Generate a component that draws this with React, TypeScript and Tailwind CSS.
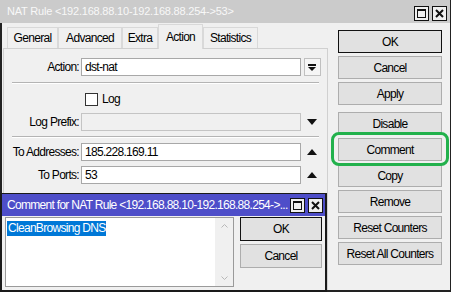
import React from 'react'

const tabs = [
  { label: 'General', w: 'w-[51px]' },
  { label: 'Advanced', w: 'w-[64px]' },
  { label: 'Extra', w: 'w-[36px]' },
  { label: 'Action', w: 'w-[45px]', active: true },
  { label: 'Statistics', w: 'w-[55px]' },
]

const buttons = [
  { label: 'OK', primary: true },
  { label: 'Cancel' },
  { label: 'Apply' },
  { label: 'Disable', gapTop: true },
  { label: 'Comment' },
  { label: 'Copy' },
  { label: 'Remove' },
  { label: 'Reset Counters' },
  { label: 'Reset All Counters' },
]

function TitleBox({ kind }: { kind: 'max' | 'close' }) {
  return (
    <div className="w-[15px] h-[15px] border border-[#111] bg-[#f0f0f0] flex items-center justify-center shrink-0">
      {kind === 'max' ? (
        <div className="w-[9px] h-[9px] border border-[#111] border-t-2" />
      ) : (
        <svg width="9" height="9" viewBox="0 0 9 9">
          <path d="M1 1 L8 8 M8 1 L1 8" stroke="#111" strokeWidth="2" />
        </svg>
      )}
    </div>
  )
}

function Tri({ up }: { up?: boolean }) {
  return (
    <svg width="10" height="6" viewBox="0 0 10 6">
      <path d={up ? 'M0 6 L5 0 L10 6 Z' : 'M0 0 L10 0 L5 6 Z'} fill="#111" />
    </svg>
  )
}

function Field({ label, value, disabled, side }: { label: string; value?: string; disabled?: boolean; side?: React.ReactNode }) {
  return (
    <div className="flex items-center h-[18px]">
      <div className="w-[77px] text-right pr-[2px] whitespace-nowrap">{label}</div>
      <div
        className={`w-[220px] h-[18px] border px-[3px] leading-[16px] ${
          disabled ? 'bg-[#f0f0f0] border-[#c4c4c4]' : 'bg-white border-[#a8a8a8]'
        }`}
      >
        {value}
      </div>
      <div className="w-[20px] flex justify-center ml-[1px]">{side}</div>
    </div>
  )
}

export default function App() {
  return (
    <div className="relative w-[452px] h-[292px] bg-white overflow-hidden font-['Liberation_Sans',Arial,sans-serif] text-[12px] tracking-[-0.7px] text-black">
      <div className="w-[451px] h-[292px] bg-[#f0f0f0] border-r border-[#222] flex flex-col">
        {/* title bar */}
        <div className="h-[23px] bg-[#cbcbcb] flex items-center pl-[7px] pr-[3px] shrink-0">
          <span className="text-[11px] tracking-[-0.2px] text-[#f8f8f8] whitespace-nowrap">NAT Rule &lt;192.168.88.10-192.168.88.254-&gt;53&gt;</span>
          <div className="ml-auto flex gap-[3px] mt-[3px]">
            <TitleBox kind="max" />
            <TitleBox kind="close" />
          </div>
        </div>

        <div className="flex flex-1 border-l-2 border-b-2 border-[#222]">
          {/* left tabbed area */}
          <div className="w-[326px] flex flex-col">
            <div className="flex items-end h-[25px] pl-[5px]">
              {tabs.map((t) => (
                <div
                  key={t.label}
                  className={`${t.w} flex items-center justify-center border border-b-0 border-[#d9d9d9] whitespace-nowrap ${
                    t.active ? 'h-[25px] bg-[#f0f0f0] -mb-[1px] relative z-10 border-[#d0d0d0]' : 'h-[21px] bg-[#f0f0f0]'
                  }`}
                >
                  {t.label}
                </div>
              ))}
            </div>
            <div className="ml-[1px] flex-1 border border-[#d0d0d0] bg-[#f0f0f0] pt-[9px]">
              <Field
                label="Action:"
                value="dst-nat"
                side={
                  <div className="w-[17px] h-[18px] border border-[#c0c0c0] bg-[#f5f5f5] flex flex-col items-center justify-center gap-[1px]">
                    <div className="w-[8px] h-[2px] bg-[#111]" />
                    <svg width="8" height="4" viewBox="0 0 8 4">
                      <path d="M0 0 L8 0 L4 4 Z" fill="#111" />
                    </svg>
                  </div>
                }
              />
              <div className="mx-[8px] mt-[6px] border-t border-[#b4b4b4] border-b border-b-white" />
              <div className="flex items-center mt-[8px] h-[14px] pl-[81px]">
                <div className="w-[13px] h-[13px] bg-white border border-[#333]" />
                <span className="ml-[4px]">Log</span>
              </div>
              <div className="mt-[7px]">
                <Field label="Log Prefix:" disabled side={<Tri />} />
              </div>
              <div className="mx-[8px] mt-[5px] border-t border-[#b4b4b4] border-b border-b-white" />
              <div className="mt-[5px] flex flex-col gap-[5px]">
                <Field label="To Addresses:" value="185.228.169.11" side={<Tri up />} />
                <Field label="To Ports:" value="53" side={<Tri up />} />
              </div>
            </div>
          </div>

          {/* right buttons */}
          <div className="ml-[10px] pt-[7px] flex flex-col w-[104px]">
            {buttons.map((b) => (
              <div
                key={b.label}
                className={`h-[23px] w-[104px] flex items-center justify-center bg-[#e1e1e1] border whitespace-nowrap ${
                  b.primary ? 'border-[#111]' : 'border-[#adadad]'
                } ${b.gapTop ? 'mt-[7px]' : b.label === 'OK' ? '' : 'mt-[3px]'}`}
              >
                {b.label}
              </div>
            ))}
          </div>
        </div>
      </div>

      {/* highlight ring */}
      <div className="absolute left-[331px] top-[132px] w-[118px] h-[34px] border-[3px] border-[#22b14c] rounded-[8px]" />

      {/* comment dialog */}
      <div className="absolute left-0 top-[193px] w-[327px] h-[99px] border-2 border-t border-[#1a1a1a] bg-[#f0f0f0] flex flex-col">
        <div className="h-[22px] bg-[#4e4ec9] flex items-center pl-[5px] pr-[2px] shrink-0 overflow-hidden">
          <span className="text-[12px] text-white whitespace-nowrap">
            Comment for NAT Rule &lt;192.168.88.10-192.168.88.254-&gt;...
          </span>
          <div className="ml-auto flex gap-[3px]">
            <TitleBox kind="max" />
            <TitleBox kind="close" />
          </div>
        </div>
        <div className="flex flex-1 pl-[3px] pt-[1px] pb-[3px]">
          <div className="w-[229px] h-[70px] bg-white border border-[#9a9a9a] flex">
            <div className="flex-1 pl-[1px] pt-[1px]">
              <span className="bg-[#0078d7] text-white px-[1px] leading-[15px] inline-block">CleanBrowsing DNS</span>
            </div>
            <div className="w-[18px] bg-[#f0f0f0] flex flex-col items-center justify-between py-[6px]">
              <svg width="7" height="4" viewBox="0 0 7 4">
                <path d="M0.5 3.5 L3.5 0.5 L6.5 3.5" stroke="#b8b8b8" fill="none" />
              </svg>
              <svg width="7" height="4" viewBox="0 0 7 4">
                <path d="M0.5 0.5 L3.5 3.5 L6.5 0.5" stroke="#b8b8b8" fill="none" />
              </svg>
            </div>
          </div>
          <div className="ml-[6px] flex flex-col gap-[3px]">
            <div className="w-[82px] h-[24px] flex items-center justify-center bg-[#e1e1e1] border border-[#111]">OK</div>
            <div className="w-[82px] h-[24px] flex items-center justify-center bg-[#e1e1e1] border border-[#adadad]">Cancel</div>
          </div>
        </div>
      </div>
    </div>
  )
}
